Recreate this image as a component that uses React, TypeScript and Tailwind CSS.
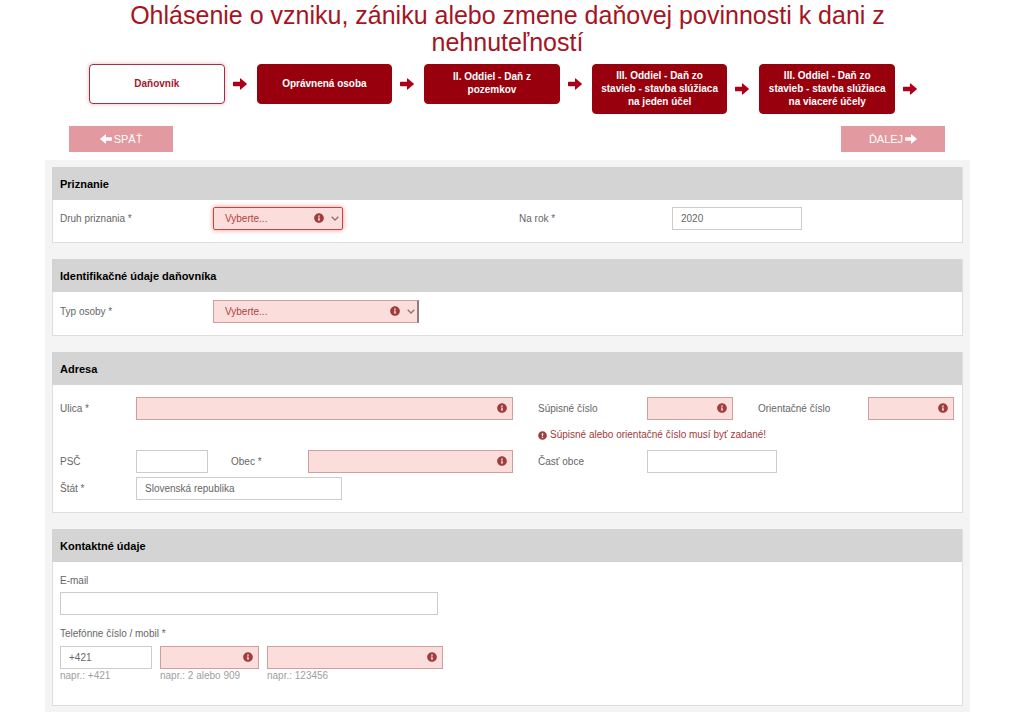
import React from "react";
import { FaExclamationCircle, FaInfoCircle } from "react-icons/fa";

const steps = [
  { label: "Daňovník", active: true, tall: false },
  { label: "Oprávnená osoba", active: false, tall: false },
  { label: "II. Oddiel - Daň z pozemkov", active: false, tall: false },
  { label: "III. Oddiel - Daň zo stavieb - stavba slúžiaca na jeden účel", active: false, tall: true },
  { label: "III. Oddiel - Daň zo stavieb - stavba slúžiaca na viaceré účely", active: false, tall: true },
];

function Arrow({ className = "" }: { className?: string }) {
  return (
    <svg viewBox="0 0 14 12" fill="currentColor" aria-hidden="true" className={"shrink-0 " + className}>
      <path d="M0.6 3.8H7V0.8Q7 0 7.7 0.5L13.6 5.5Q14.1 6 13.6 6.5L7.7 11.5Q7 12 7 11.2V8.2H0.6Q0 8.2 0 7.6V4.4Q0 3.8 0.6 3.8Z" />
    </svg>
  );
}

function Panel({ title, className = "", children }: { title: string; className?: string; children: React.ReactNode }) {
  return (
    <section className="border-r border-b border-[#dedede] bg-white">
      <h2 className="flex h-[33px] items-center bg-[#d4d4d4] pl-2 text-[11px] font-bold text-black">{title}</h2>
      <div className={"border-l border-[#dedede] pr-2 pl-[7px] " + className}>{children}</div>
    </section>
  );
}

type FieldProps = { id: string; label?: string; value?: string; invalid?: boolean; className?: string };

function Field({ id, label, value = "", invalid = false, className = "w-full" }: FieldProps) {
  return (
    <div className={"relative " + className}>
      <input
        id={id}
        type="text"
        defaultValue={value}
        aria-label={label}
        aria-invalid={invalid}
        className={
          "block h-[23px] w-full border px-2 text-[10px] text-[#666] outline-none " +
          (invalid ? "border-[#cfa09b] bg-[#fbdedb]" : "border-[#cccccc] bg-white")
        }
      />
      {invalid && <FaInfoCircle className="pointer-events-none absolute top-[6px] right-[6px] size-[10px] text-[#a03c3c]" />}
    </div>
  );
}

function SelectField({ id, className, selectClass }: { id: string; className: string; selectClass: string }) {
  return (
    <div className={"relative " + className}>
      <select
        id={id}
        className={"block h-[23px] w-full appearance-none border bg-[#fbdedb] pl-[11px] text-[10px] text-[#b0413e] outline-none " + selectClass}
      >
        <option>Vyberte...</option>
      </select>
      <FaInfoCircle className="pointer-events-none absolute top-[6px] right-[19px] size-[10px] text-[#a03c3c]" />
      <svg
        viewBox="0 0 8 5"
        fill="none"
        stroke="#8a7472"
        strokeWidth="1.3"
        aria-hidden="true"
        className="pointer-events-none absolute top-[9px] right-[4px] h-[5px] w-2"
      >
        <path d="M0.7 0.7L4 4L7.3 0.7" />
      </svg>
    </div>
  );
}

export default function App() {
  return (
    <div className="min-h-screen bg-white pr-[54px] pl-[45px] font-['Liberation_Sans',Arial,sans-serif] text-[10px] leading-[14px] text-[#666]">
      <h1 className="mx-auto max-w-[800px] pt-[2px] text-center text-[25px] leading-[27px] text-[#a51422]">
        Ohlásenie o vzniku, zániku alebo zmene daňovej povinnosti k dani z nehnuteľností
      </h1>

      <ol className="mt-2 grid grid-cols-5 items-start pr-[43px] pl-11">
        {steps.map((s) => (
          <li key={s.label} className="flex items-center">
            <button
              type="button"
              className={
                "flex-1 rounded-[4px] border px-[5px] pb-[2px] text-[10px] leading-[13px] font-bold " +
                (s.tall ? "h-[50px] " : "h-[40px] ") +
                (s.active
                  ? "border-[#a03048] bg-white text-[#a6192e] shadow-[0_0_4px_#e9b6bc]"
                  : "border-[#98000d] bg-[#98000d] text-white")
              }
            >
              {s.label}
            </button>
            <Arrow className="mr-[10px] ml-2 h-3 w-[14px] text-[#ad0018]" />
          </li>
        ))}
      </ol>

      <nav className="mt-3 flex justify-between pr-[25px] pl-6 text-[11px] text-white">
        <button type="button" className="flex h-[26px] w-[104px] items-center justify-center gap-[2px] bg-[#e2999f] pb-px">
          <Arrow className="h-[10px] w-[12px] rotate-180" />
          SPÄŤ
        </button>
        <button type="button" className="flex h-[26px] w-[104px] items-center justify-center gap-[2px] bg-[#e2999f] pb-px">
          ĎALEJ
          <Arrow className="h-[10px] w-[12px]" />
        </button>
      </nav>

      <form className="mt-2 flex flex-col gap-4 bg-[#f4f4f4] px-[7px] pt-[7px] pb-[6px]">
        <Panel title="Priznanie" className="grid grid-cols-[153fr_306fr_153fr_282fr] items-center pt-[7px] pb-3">
          <label htmlFor="druh">Druh priznania *</label>
          <SelectField
            id="druh"
            className="w-[130px]"
            selectClass="rounded-[2px] border-[#b94a48] shadow-[0_0_5px_#ee8f86]"
          />
          <label htmlFor="rok">Na rok *</label>
          <Field id="rok" value="2020" className="w-[130px]" />
        </Panel>

        <Panel title="Identifikačné údaje daňovníka" className="grid grid-cols-[153fr_741fr] items-center pt-2 pb-3">
          <label htmlFor="typ">Typ osoby *</label>
          <SelectField id="typ" className="w-[206px]" selectClass="border-[#cfa09b] border-r-2 border-r-[#8f7b79]" />
        </Panel>

        <Panel title="Adresa" className="py-3">
          <div className="grid grid-cols-[76fr_377fr_25fr_109fr_86fr_25fr_110fr_86fr] items-center">
            <label htmlFor="ulica">Ulica *</label>
            <Field id="ulica" invalid />
            <label htmlFor="supisne" className="col-start-4">Súpisné číslo</label>
            <Field id="supisne" invalid />
            <label htmlFor="orientacne" className="col-start-7">Orientačné číslo</label>
            <Field id="orientacne" invalid />
            <p role="alert" className="col-span-5 col-start-4 my-2 flex items-center gap-[3px] text-[#a03c3c]">
              <FaExclamationCircle className="size-[9px]" />
              Súpisné alebo orientačné číslo musí byť zadané!
            </p>
          </div>
          <div className="grid grid-cols-[76fr_72fr_23fr_77fr_205fr_25fr_109fr_130fr_177fr] items-center gap-y-1">
            <label htmlFor="psc">PSČ</label>
            <Field id="psc" />
            <label htmlFor="obec" className="col-start-4">Obec *</label>
            <Field id="obec" invalid />
            <label htmlFor="cast" className="col-start-7">Časť obce</label>
            <Field id="cast" />
            <label htmlFor="stat" className="col-start-1">Štát *</label>
            <Field id="stat" value="Slovenská republika" className="col-span-4 w-[206px]" />
          </div>
        </Panel>

        <Panel title="Kontaktné údaje" className="pt-3 pb-[22px]">
          <label htmlFor="email" className="block">E-mail</label>
          <Field id="email" className="mt-1 w-[378px]" />
          <fieldset>
            <legend className="pt-3">Telefónne číslo / mobil *</legend>
            <div className="flex gap-2 pt-[5px] text-[#a0a0a0]">
              <div className="w-[92px]">
                <Field id="predvolba" label="Predvoľba krajiny" value="+421" />
                <p>napr.: +421</p>
              </div>
              <div className="w-[99px]">
                <Field id="smer" label="Predvoľba" invalid />
                <p>napr.: 2 alebo 909</p>
              </div>
              <div className="w-[176px]">
                <Field id="cislo" label="Číslo" invalid />
                <p>napr.: 123456</p>
              </div>
            </div>
          </fieldset>
        </Panel>
      </form>
    </div>
  );
}
